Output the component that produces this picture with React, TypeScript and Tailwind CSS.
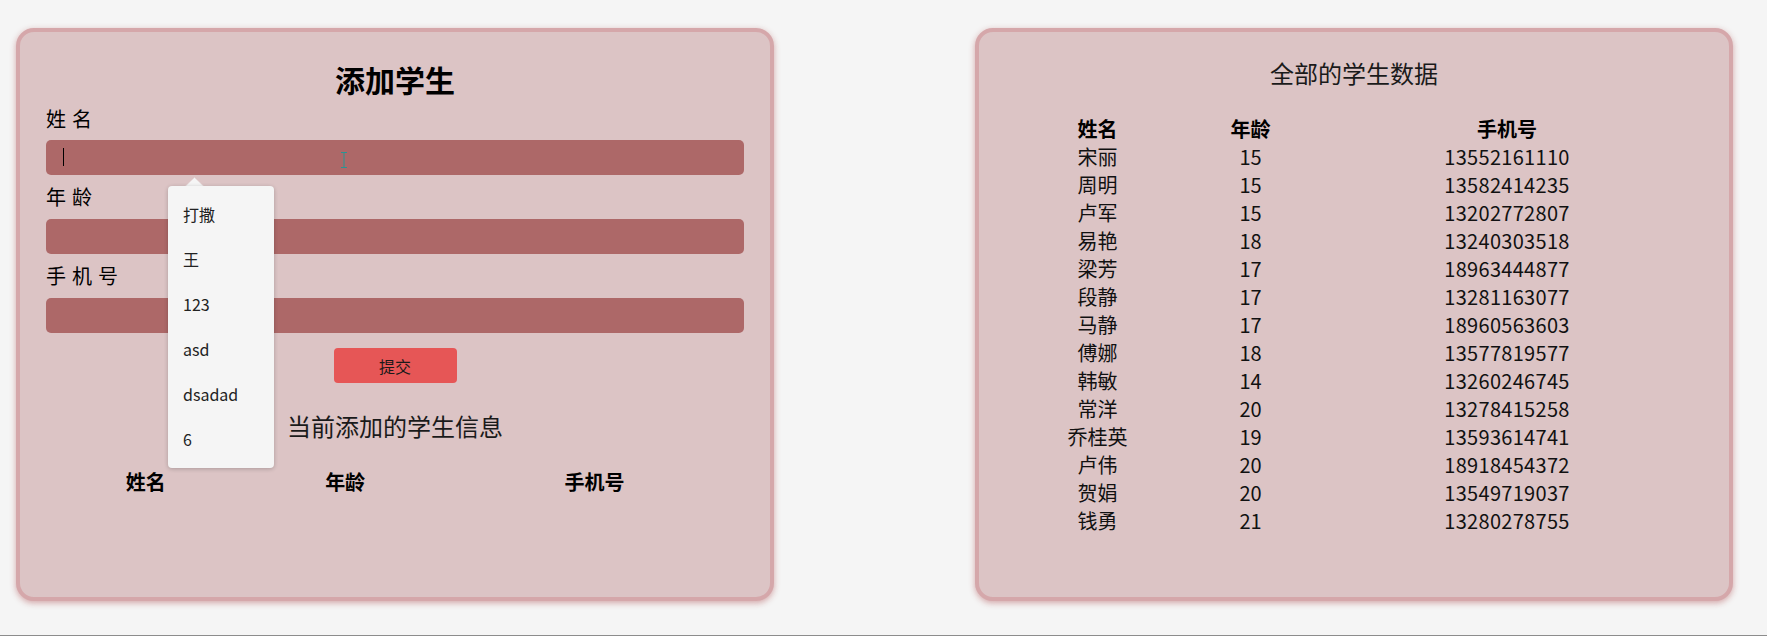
import React from "react";

const students = [
  { name: "宋丽", age: 15, phone: "13552161110" },
  { name: "周明", age: 15, phone: "13582414235" },
  { name: "卢军", age: 15, phone: "13202772807" },
  { name: "易艳", age: 18, phone: "13240303518" },
  { name: "梁芳", age: 17, phone: "18963444877" },
  { name: "段静", age: 17, phone: "13281163077" },
  { name: "马静", age: 17, phone: "18960563603" },
  { name: "傅娜", age: 18, phone: "13577819577" },
  { name: "韩敏", age: 14, phone: "13260246745" },
  { name: "常洋", age: 20, phone: "13278415258" },
  { name: "乔桂英", age: 19, phone: "13593614741" },
  { name: "卢伟", age: 20, phone: "18918454372" },
  { name: "贺娟", age: 20, phone: "13549719037" },
  { name: "钱勇", age: 21, phone: "13280278755" },
];

const suggestions = ["打撒", "王", "123", "asd", "dsadad", "6"];

const font = {
  fontFamily: '"Noto Sans CJK SC", "Noto Sans", sans-serif',
};

const Card: React.FC<{ children: React.ReactNode }> = ({ children }) => (
  <div className="relative w-[758px] h-[573px] shrink-0 rounded-[18px] border-4 border-[#d5a7aa] bg-[#dcc4c5] shadow-[0_2px_6px_rgba(205,150,153,0.85)]">
    {children}
  </div>
);

const Field: React.FC<{ label: string; first?: boolean }> = ({ label, first }) => (
  <>
    <div
      className={`flex items-center text-[20px] tracking-[6px] text-black ${
        first ? "h-[43px]" : "h-[44px]"
      }`}
    >
      {label}
    </div>
    <div className="h-[35px] rounded-[5px] bg-[#ad6868]" />
  </>
);

export default function App() {
  return (
    <div
      className="relative w-[1767px] h-[636px] overflow-hidden bg-[#f5f5f5]"
      style={font}
    >
      <div className="flex gap-[201px] pt-[28px] pl-[16px]">
        {/* Add student */}
        <Card>
          <div className="px-[26px] pt-[29px]">
            <h1 className="h-[36px] text-center text-[30px] leading-[36px] font-bold text-black">
              添加学生
            </h1>
            <div className="relative">
              <Field label="姓名" first />
              <Field label="年龄" />
              <Field label="手机号" />
              {/* caret */}
              <div className="absolute left-[17px] top-[51px] h-[18px] w-px bg-black" />
              {/* mouse cursor */}
              <svg
                className="absolute left-[294px] top-[55px]"
                width="8"
                height="16"
                viewBox="0 0 8 16"
              >
                <path
                  d="M1 0.5h6M1 15.5h6M4 0.5v15"
                  stroke="#2a9494"
                  strokeWidth="1"
                  fill="none"
                />
              </svg>
            </div>
            <button className="mx-auto mt-[15px] block h-[35px] w-[123px] rounded-[4px] bg-[#e65656] text-[16px] text-[#1a1a1a]">
              提交
            </button>
            <h2 className="mt-[25px] h-[36px] text-center text-[24px] leading-[36px] text-[#1a1a1a]">
              当前添加的学生信息
            </h2>
            <div className="mt-[23px] grid h-[28px] grid-cols-[2fr_2fr_3fr] items-center text-center text-[20px] font-bold text-black">
              <div>姓名</div>
              <div>年龄</div>
              <div>手机号</div>
            </div>
          </div>

          {/* autocomplete dropdown */}
          <svg
            className="absolute left-[164px] top-[145px] z-10"
            width="21"
            height="10"
            viewBox="0 0 21 10"
          >
            <path d="M0.5 10L10.5 0.5L20.5 10Z" fill="#f5f5f5" stroke="#e4d6d6" strokeWidth="0.5" />
          </svg>
          <div className="absolute left-[148px] top-[154px] z-10 w-[106px] rounded-[4px] bg-[#f5f5f5] pt-[5px] pb-[7px] shadow-[0_1px_4px_rgba(0,0,0,0.22)]">
            {suggestions.map((s) => (
              <div
                key={s}
                className="flex h-[45px] items-center pl-[15px] text-[16px] text-[#222]"
              >
                {s}
              </div>
            ))}
          </div>
        </Card>

        {/* All students */}
        <Card>
          <div className="pt-[23px]">
            <h2 className="h-[36px] text-center text-[24px] leading-[36px] text-[#1a1a1a]">
              全部的学生数据
            </h2>
            <div className="mx-auto mt-[23px] w-[601px] text-[20px] text-[#111]">
              <div className="grid h-[28px] grid-cols-[88px_218px_295px] items-center text-center font-bold text-black">
                <div>姓名</div>
                <div>年龄</div>
                <div>手机号</div>
              </div>
              {students.map((s) => (
                <div
                  key={s.phone}
                  className="grid h-[28px] grid-cols-[88px_218px_295px] items-center text-center"
                >
                  <div>{s.name}</div>
                  <div>{s.age}</div>
                  <div className="tracking-[0.3px]">{s.phone}</div>
                </div>
              ))}
            </div>
          </div>
        </Card>
      </div>

      {/* edge of the next section */}
      <div className="absolute bottom-0 left-0 h-px w-full bg-[#8c8c8c]" />
    </div>
  );
}
